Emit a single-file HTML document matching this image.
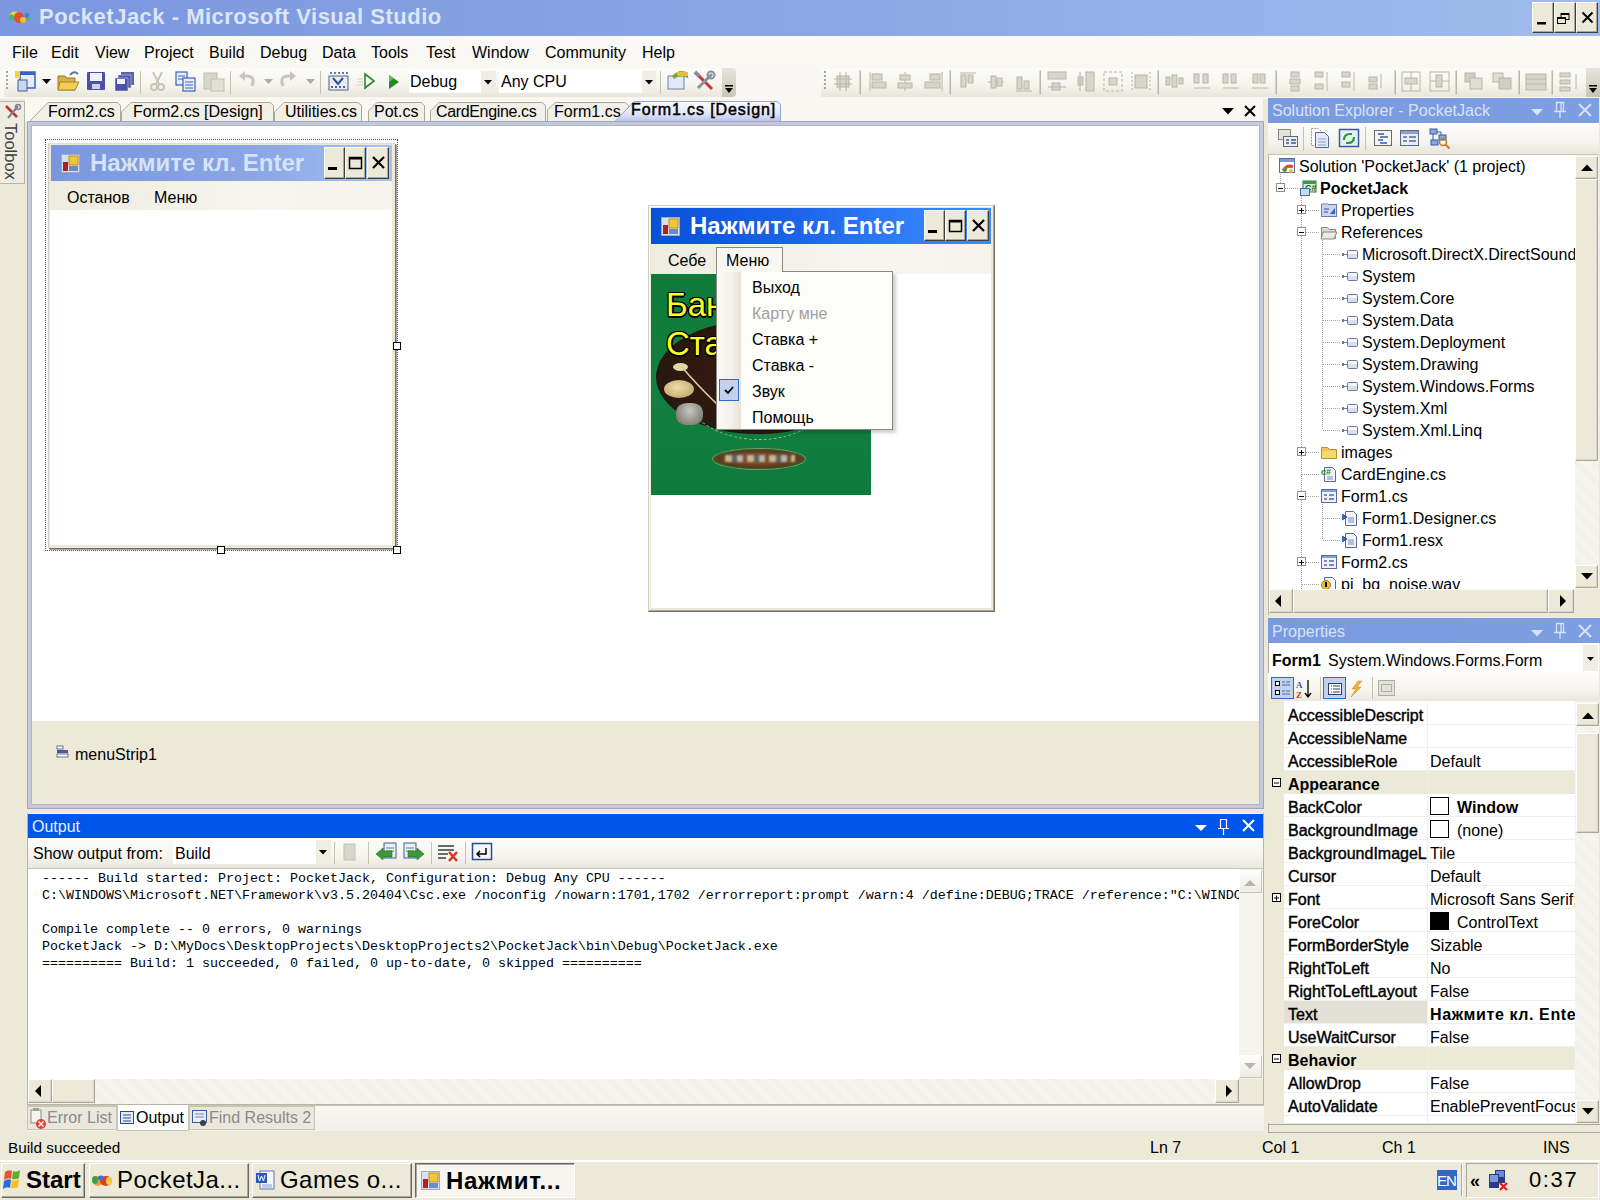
<!DOCTYPE html>
<html><head><meta charset="utf-8">
<style>
*{margin:0;padding:0;box-sizing:border-box}
html,body{width:1600px;height:1200px;overflow:hidden;background:#ECE9D8;font-family:"Liberation Sans",sans-serif;font-size:16px;color:#000;position:relative}
.a{position:absolute}
.t{position:absolute;white-space:nowrap;line-height:1}
svg{position:absolute;overflow:visible}
.mono{font-family:"Liberation Mono",monospace}
.btn3d{position:absolute;background:#ECE9D8;border:1px solid;border-color:#fff #404040 #404040 #fff;box-shadow:inset -1px -1px 0 #ACA899}
.sep{position:absolute;width:1px;background:#C5C2B2;box-shadow:1px 0 0 #fff}
.row{position:absolute;left:0;height:22px}
</style></head><body>

<!-- ============ TITLE BAR ============ -->
<div class="a" style="left:0;top:0;width:1600px;height:36px;background:linear-gradient(90deg,#7A97DF 0%,#86A3E3 40%,#97B4EA 80%,#9FBCEC 100%)"></div>
<svg style="left:0;top:0" width="40" height="36">
 <ellipse cx="15" cy="15" rx="5" ry="3.5" fill="#E0D840"/>
 <ellipse cx="11.5" cy="17.5" rx="2.5" ry="3" fill="#40B880"/>
 <ellipse cx="19" cy="17.5" rx="5" ry="5.5" fill="#E05030"/>
 <ellipse cx="23" cy="20" rx="3" ry="3" fill="#F0C030"/>
 <ellipse cx="27" cy="15.5" rx="2.5" ry="2.5" fill="#4A80C8"/>
 <ellipse cx="28" cy="18.5" rx="2" ry="1.8" fill="#60B040"/>
</svg>
<div class="t" style="left:39px;top:6px;font-size:22px;font-weight:bold;color:#DCE6F8;letter-spacing:0.5px">PocketJack - Microsoft Visual Studio</div>
<div class="btn3d" style="left:1532px;top:2px;width:22px;height:31px"></div>
<div class="btn3d" style="left:1554px;top:2px;width:22px;height:31px"></div>
<div class="btn3d" style="left:1576px;top:2px;width:22px;height:31px"></div>
<svg style="left:0;top:0" width="1600" height="36">
 <rect x="1537" y="22" width="9" height="2.5" fill="#000"/>
 <rect x="1561" y="13.5" width="8" height="6" fill="none" stroke="#000" stroke-width="1"/><rect x="1561" y="13" width="8" height="2" fill="#000"/>
 <rect x="1557.5" y="17.5" width="8" height="6" fill="#ECE9D8" stroke="#000" stroke-width="1"/><rect x="1557" y="17" width="9" height="2" fill="#000"/>
 <path d="M1582.5 12.5 L1592.5 22.5 M1592.5 12.5 L1582.5 22.5" stroke="#000" stroke-width="2"/>
</svg>

<!-- ============ MENU BAR ============ -->
<div class="a" style="left:0;top:36px;width:1600px;height:31px;background:linear-gradient(180deg,#FAF9F5,#F8F7F2)"></div>
<div class="t" style="left:12px;top:45px">File</div>
<div class="t" style="left:51px;top:45px">Edit</div>
<div class="t" style="left:95px;top:45px">View</div>
<div class="t" style="left:144px;top:45px">Project</div>
<div class="t" style="left:209px;top:45px">Build</div>
<div class="t" style="left:260px;top:45px">Debug</div>
<div class="t" style="left:322px;top:45px">Data</div>
<div class="t" style="left:371px;top:45px">Tools</div>
<div class="t" style="left:426px;top:45px">Test</div>
<div class="t" style="left:472px;top:45px">Window</div>
<div class="t" style="left:545px;top:45px">Community</div>
<div class="t" style="left:642px;top:45px">Help</div>

<!-- ============ TOOLBAR ROW ============ -->
<div class="a" style="left:0;top:67px;width:1600px;height:32px;background:#F8F7F3"></div>
<div class="a" style="left:4px;top:68px;width:732px;height:29px;background:linear-gradient(180deg,#FBFBF9 0%,#F6F5F0 55%,#E8E6DA 100%);border-radius:2px 4px 4px 2px"></div>
<div class="a" style="left:722px;top:68px;width:14px;height:29px;background:linear-gradient(180deg,#E6E4DA,#C8C5B5);border-radius:0 4px 4px 0"></div>
<svg style="left:722px;top:68px" width="14" height="29"><rect x="3" y="17" width="8" height="1.5" fill="#000"/><path d="M3 20 L11 20 L7 25 Z" fill="#000"/></svg>

<!-- ============ TOOLBAR ICONS ============ -->
<div class="a" style="left:821px;top:68px;width:779px;height:29px;background:linear-gradient(180deg,#FBFBF9 0%,#F6F5F0 55%,#E8E6DA 100%);border-radius:2px 0 0 2px"></div>
<div class="a" style="left:1586px;top:68px;width:14px;height:29px;background:linear-gradient(180deg,#E6E4DA,#C8C5B5)"></div>
<svg style="left:1586px;top:68px" width="14" height="29"><rect x="3" y="17" width="8" height="1.5" fill="#000"/><path d="M3 20 L11 20 L7 25 Z" fill="#000"/></svg>

<!-- combos -->
<div class="a" style="left:409px;top:71px;width:87px;height:22px;background:#fff"></div>
<div class="a" style="left:481px;top:71px;width:15px;height:22px;background:#EFEDE4"></div>
<div class="t" style="left:410px;top:74px;font-size:16px">Debug</div>
<div class="a" style="left:499px;top:71px;width:157px;height:22px;background:#fff"></div>
<div class="a" style="left:642px;top:71px;width:14px;height:22px;background:#EFEDE4"></div>
<div class="t" style="left:501px;top:74px;font-size:16px">Any CPU</div>

<svg style="left:0;top:0" width="1600" height="100">
 <!-- gripper -->
 <g fill="#A8A69A"><rect x="6" y="71" width="2" height="2"/><rect x="6" y="75" width="2" height="2"/><rect x="6" y="79" width="2" height="2"/><rect x="6" y="83" width="2" height="2"/><rect x="6" y="87" width="2" height="2"/></g>
 <!-- new project -->
 <rect x="20" y="72" width="15" height="16" fill="#E6ECF8" stroke="#3A62B8" stroke-width="1.5"/>
 <rect x="20" y="72" width="15" height="3" fill="#3A62B8"/>
 <rect x="15" y="71" width="5" height="7" fill="#F2D040"/>
 <rect x="18" y="80" width="9" height="11" fill="#C8D8F0" stroke="#3A5A98" stroke-width="1"/>
 <path d="M42 79 L51 79 L46.5 84 Z" fill="#000"/>
 <!-- open -->
 <path d="M58 76 L65 76 L67 78 L75 78 L75 90 L58 90 Z" fill="#D8B048" stroke="#9A7A28" stroke-width="1"/>
 <path d="M60 82 L79 82 L75 90 L58 90 Z" fill="#F4CC58" stroke="#A88428" stroke-width="1"/>
 <path d="M70 75 Q74 70 78 74" fill="none" stroke="#5A78A8" stroke-width="2"/>
 <!-- save -->
 <rect x="87" y="72" width="18" height="18" fill="#4A52A8" rx="1"/>
 <rect x="90" y="73" width="12" height="8" fill="#F0F0F8"/>
 <rect x="92" y="84" width="8" height="5" fill="#D0D4E8"/>
 <!-- save all -->
 <rect x="121" y="72" width="13" height="13" fill="#5A62B0"/>
 <rect x="118" y="75" width="13" height="13" fill="#4E56AA" stroke="#E8E8F0" stroke-width="0.5"/>
 <rect x="115" y="78" width="13" height="13" fill="#4A52A8" stroke="#E8E8F0" stroke-width="0.5"/>
 <rect x="117" y="79" width="8" height="5" fill="#F0F0F8"/>
 <rect x="140" y="71" width="1" height="23" fill="#C5C2B2"/>
 <!-- cut (disabled) -->
 <g stroke="#C8C6BA" stroke-width="2" fill="none"><path d="M153 72 L159 84 M162 72 L156 84"/><circle cx="154" cy="87" r="3"/><circle cx="161" cy="87" r="3"/></g>
 <!-- copy -->
 <rect x="176" y="72" width="11" height="13" fill="#E8EEF8" stroke="#3A62B8" stroke-width="1.2"/>
 <rect x="183" y="78" width="12" height="13" fill="#E8EEF8" stroke="#3A62B8" stroke-width="1.2"/>
 <g stroke="#3A62B8" stroke-width="1"><path d="M178 76h7M178 79h5M185 82h8M185 85h8M185 88h8"/></g>
 <!-- paste disabled -->
 <rect x="204" y="73" width="13" height="16" fill="#D8D6CA" stroke="#C0BEB0" stroke-width="1"/>
 <rect x="211" y="79" width="13" height="12" fill="#E2E0D4" stroke="#C0BEB0" stroke-width="1"/>
 <rect x="230" y="71" width="1" height="23" fill="#C5C2B2"/>
 <!-- undo/redo disabled -->
 <path d="M252 86 Q256 76 246 76 L242 76" fill="none" stroke="#C8C6BA" stroke-width="3"/><path d="M239 76 L245 71 L245 81 Z" fill="#C8C6BA"/>
 <path d="M264 79 L273 79 L268.5 84 Z" fill="#B0AEA2"/>
 <path d="M283 86 Q279 76 289 76 L293 76" fill="none" stroke="#C8C6BA" stroke-width="3"/><path d="M296 76 L290 71 L290 81 Z" fill="#C8C6BA"/>
 <path d="M306 79 L315 79 L310.5 84 Z" fill="#B0AEA2"/>
 <rect x="320" y="71" width="1" height="23" fill="#C5C2B2"/>
 <!-- grid icon -->
 <rect x="329" y="76" width="19" height="14" fill="#E8ECF4" stroke="#506088" stroke-width="1"/>
 <g fill="#6078A8"><rect x="330" y="72" width="2" height="2"/><rect x="334" y="72" width="2" height="2"/><rect x="338" y="72" width="2" height="2"/><rect x="342" y="72" width="2" height="2"/><rect x="346" y="72" width="2" height="2"/></g>
 <path d="M333 78 L338 84 L343 78" fill="none" stroke="#2850A0" stroke-width="2"/>
 <g fill="#506088"><rect x="331" y="86" width="2" height="2"/><rect x="335" y="86" width="2" height="2"/><rect x="339" y="86" width="2" height="2"/><rect x="343" y="86" width="2" height="2"/></g>
 <!-- start without debug outline -->
 <path d="M365 74 L374 81 L365 88 Z" fill="none" stroke="#2A8A2A" stroke-width="1.6"/>
 <g stroke="#E0D0A8" stroke-width="1"><path d="M357 79h6M358 82h6M357 85h6"/></g>
 <!-- green play -->
 <path d="M389 75 L399 82 L389 89 Z" fill="#1E8A1E"/>
 <path d="M389 75 L394 78.5 L389 82 Z" fill="#5CC05C"/>
 <!-- combo arrows -->
 <path d="M484 80 L492 80 L488 84.5 Z" fill="#000"/>
 <path d="M645 80 L653 80 L649 84.5 Z" fill="#000"/>
 <rect x="660" y="71" width="1" height="23" fill="#C5C2B2"/>
 <!-- solution props / tools -->
 <rect x="668" y="76" width="16" height="13" fill="#E0E8F4" stroke="#6A82B0" stroke-width="1"/>
 <path d="M672 76 Q680 68 688 73 L688 78 Q680 74 674 79 Z" fill="#7AA838"/>
 <path d="M676 72 L688 72 L688 76 L678 76 Z" fill="#E8C040"/>
 <path d="M697 74 L712 89" stroke="#D03030" stroke-width="3"/>
 <path d="M712 74 L698 88" stroke="#8A90A0" stroke-width="3"/>
 <circle cx="711" cy="75" r="3.5" fill="none" stroke="#8A90A0" stroke-width="2"/>
 <rect x="694" y="72" width="6" height="4" fill="#8A90A0" transform="rotate(45 697 74)"/>

 <!-- ===== layout toolbar (disabled gray) ===== -->
 <g fill="#A8A69A"><rect x="824" y="71" width="2" height="2"/><rect x="824" y="75" width="2" height="2"/><rect x="824" y="79" width="2" height="2"/><rect x="824" y="83" width="2" height="2"/><rect x="824" y="87" width="2" height="2"/></g>
 <g stroke="#B8B6A8" fill="none" stroke-width="1">
  <!-- grid -->
  <rect x="837" y="76" width="12" height="11" fill="#D8D6C8"/><path d="M834 79h18M834 84h18M840 72v19M846 72v19"/>
  <rect x="860" y="71" width="0.5" height="23" fill="#C5C2B2"/>
  <!-- align lefts -->
  <path d="M870 72v19"/><rect x="872" y="74" width="10" height="6" fill="#D8D6C8"/><rect x="872" y="82" width="14" height="6" fill="#D8D6C8"/>
  <!-- centers -->
  <path d="M905 72v19"/><rect x="900" y="75" width="10" height="5" fill="#D8D6C8"/><rect x="898" y="83" width="14" height="5" fill="#D8D6C8"/>
  <!-- rights -->
  <path d="M942 72v19"/><rect x="930" y="74" width="10" height="6" fill="#D8D6C8"/><rect x="925" y="82" width="15" height="6" fill="#D8D6C8"/>
  <rect x="950" y="71" width="0.5" height="23" fill="#C5C2B2"/>
  <!-- tops -->
  <path d="M960 73h16"/><rect x="961" y="75" width="5" height="12" fill="#D8D6C8"/><rect x="968" y="75" width="5" height="8" fill="#D8D6C8"/>
  <!-- middles -->
  <path d="M988 82h16"/><rect x="991" y="76" width="5" height="12" fill="#D8D6C8"/><rect x="997" y="78" width="5" height="8" fill="#D8D6C8"/>
  <!-- bottoms -->
  <path d="M1016 91h16"/><rect x="1017" y="77" width="5" height="12" fill="#D8D6C8"/><rect x="1024" y="81" width="5" height="8" fill="#D8D6C8"/>
  <rect x="1040" y="71" width="0.5" height="23" fill="#C5C2B2"/>
  <!-- same width -->
  <rect x="1048" y="72" width="18" height="7" fill="#D8D6C8"/><rect x="1052" y="83" width="8" height="7" fill="#D8D6C8"/><path d="M1048 87h18"/>
  <!-- same height -->
  <rect x="1086" y="72" width="8" height="19" fill="#D8D6C8"/><rect x="1078" y="77" width="5" height="8" fill="#D8D6C8"/><path d="M1080 72v19"/>
  <!-- same size -->
  <rect x="1104" y="72" width="18" height="19" stroke-dasharray="3 2"/><rect x="1109" y="78" width="8" height="7" fill="#D8D6C8"/>
  <!-- size to grid -->
  <rect x="1135" y="75" width="12" height="13" fill="#D8D6C8"/><path d="M1132 72v19M1150 72v19" stroke-dasharray="2 2"/>
  <rect x="1158" y="71" width="0.5" height="23" fill="#C5C2B2"/>
  <!-- horizontal spacing group -->
  <rect x="1166" y="77" width="4" height="8" fill="#D8D6C8"/><rect x="1172" y="75" width="5" height="12" fill="#D8D6C8"/><rect x="1179" y="78" width="4" height="6" fill="#D8D6C8"/>
  <rect x="1194" y="74" width="5" height="9" fill="#D8D6C8"/><rect x="1203" y="74" width="5" height="9" fill="#D8D6C8"/><path d="M1194 88h16"/>
  <rect x="1223" y="74" width="5" height="9" fill="#D8D6C8"/><rect x="1231" y="74" width="5" height="9" fill="#D8D6C8"/><path d="M1223 88h16"/>
  <rect x="1253" y="74" width="5" height="9" fill="#D8D6C8"/><rect x="1260" y="74" width="5" height="9" fill="#D8D6C8"/><path d="M1252 88h16"/>
  <rect x="1276" y="71" width="0.5" height="23" fill="#C5C2B2"/>
  <!-- vertical spacing group -->
  <rect x="1291" y="72" width="8" height="5" fill="#D8D6C8"/><rect x="1290" y="79" width="10" height="5" fill="#D8D6C8"/><rect x="1291" y="86" width="8" height="5" fill="#D8D6C8"/>
  <rect x="1315" y="72" width="8" height="5" fill="#D8D6C8"/><rect x="1315" y="84" width="8" height="5" fill="#D8D6C8"/><path d="M1327 72v19"/>
  <rect x="1342" y="72" width="8" height="5" fill="#D8D6C8"/><rect x="1342" y="82" width="8" height="5" fill="#D8D6C8"/><path d="M1354 72v19"/>
  <rect x="1369" y="77" width="8" height="5" fill="#D8D6C8"/><rect x="1369" y="84" width="8" height="5" fill="#D8D6C8"/><path d="M1381 74v14"/>
  <rect x="1395" y="71" width="0.5" height="23" fill="#C5C2B2"/>
  <!-- center horiz/vert -->
  <rect x="1402" y="72" width="18" height="19"/><path d="M1411 72v19"/><rect x="1405" y="78" width="12" height="6" fill="#D8D6C8"/>
  <rect x="1430" y="72" width="19" height="19"/><path d="M1430 81h19"/><rect x="1436" y="75" width="6" height="12" fill="#D8D6C8"/>
  <rect x="1456" y="71" width="0.5" height="23" fill="#C5C2B2"/>
  <!-- bring to front / send back -->
  <rect x="1465" y="73" width="10" height="9" fill="#D0CEC0"/><rect x="1470" y="78" width="12" height="11" fill="#E0DED2"/>
  <rect x="1493" y="73" width="10" height="9" fill="#E0DED2"/><rect x="1499" y="78" width="12" height="11" fill="#D0CEC0"/>
  <rect x="1519" y="71" width="0.5" height="23" fill="#C5C2B2"/>
  <!-- tab order -->
  <rect x="1526" y="74" width="20" height="16" fill="#D8D6C8"/><path d="M1526 79h20M1526 84h20"/>
  <rect x="1552" y="71" width="0.5" height="23" fill="#C5C2B2"/>
  <rect x="1560" y="73" width="10" height="4" fill="#D8D6C8"/><rect x="1560" y="80" width="10" height="4" fill="#D8D6C8"/><rect x="1560" y="87" width="10" height="4" fill="#D8D6C8"/><path d="M1576 74v15"/>
 </g>
</svg>

<!-- ============ TOOLBOX TAB ============ -->
<div class="a" style="left:0;top:101px;width:25px;height:83px;background:#EFEDE3;border:1px solid #B8B5A6;border-left:none"></div>
<svg style="left:0;top:0" width="30" height="190">
 <path d="M6 106 L17 117" stroke="#C03030" stroke-width="2.5"/>
 <path d="M18 106 L8 118" stroke="#7A8090" stroke-width="2"/>
 <circle cx="18" cy="107" r="2.5" fill="none" stroke="#7A8090" stroke-width="1.5"/>
</svg>
<div class="t" style="left:19px;top:123px;font-size:16.5px;color:#404040;transform-origin:0 0;transform:rotate(90deg)">Toolbox</div>

<!-- ============ DOC TABS ============ -->
<div class="a" style="left:25px;top:97px;width:1238px;height:25px;background:#F8F7F2"></div>
<svg style="left:0;top:0" width="1270" height="125">
 <g fill="#F1EFE6" stroke="#ACA899" stroke-width="1">
  <path d="M625.5 121.5 L633.5 110 L641 102.5 L774.5 102.5 L777.5 105 L777.5 121.5" fill="none"/>
  <path d="M547.5 121.5 L547.5 110 L555 102.5 L625 102.5 L628.5 105.5 L628.5 121.5"/>
  <path d="M430.5 121.5 L430.5 111 L439 102.5 L542 102.5 L545.5 105.5 L545.5 121.5"/>
  <path d="M368.5 121.5 L368.5 111 L377 102.5 L421 102.5 L424.5 105.5 L424.5 121.5"/>
  <path d="M274.5 121.5 L274.5 112 L284 102.5 L358 102.5 L361.5 105.5 L361.5 121.5"/>
  <path d="M121.5 121.5 L121.5 112 L131 102.5 L270 102.5 L273.5 105.5 L273.5 121.5"/>
  <path d="M29.5 121.5 L48 102.5 L117 102.5 L120.5 105.5 L120.5 121.5"/>
 </g>
 <defs><linearGradient id="acttab" x1="0" y1="0" x2="0" y2="1"><stop offset="0" stop-color="#FCFCFE"/><stop offset="0.55" stop-color="#E4E8F6"/><stop offset="1" stop-color="#B6C2EA"/></linearGradient></defs>
 
 <!-- tab strip dropdown & close -->
 <path d="M1222 108 L1234 108 L1228 114.5 Z" fill="#000"/>
 <path d="M1245 106 L1255 116 M1255 106 L1245 116" stroke="#000" stroke-width="2"/>
</svg>
<div class="t" style="left:48px;top:104px">Form2.cs</div>
<div class="t" style="left:133px;top:104px">Form2.cs [Design]</div>
<div class="t" style="left:285px;top:104px">Utilities.cs</div>
<div class="t" style="left:374px;top:104px">Pot.cs</div>
<div class="t" style="left:436px;top:104px;letter-spacing:-0.35px">CardEngine.cs</div>
<div class="t" style="left:554px;top:104px">Form1.cs</div>
<svg style="left:0;top:0" width="800" height="125"><path d="M614.5 122 L634 101.5 L777 101.5 L780.5 104.5 L780.5 122 Z" fill="url(#acttab)" stroke="#9AA6C8" stroke-width="1"/></svg>
<div class="t" style="left:631px;top:102px;font-size:16px;letter-spacing:0.9px;-webkit-text-stroke:0.5px #000">Form1.cs [Design]</div>

<!-- ============ DESIGN SURFACE FRAME ============ -->
<div class="a" style="left:27px;top:121px;width:237px;height:688px;width:1237px;background:#C4CADC;border:1px solid #9EA5BC"></div>
<div class="a" style="left:31px;top:125px;width:1229px;height:680px;border:1px solid #AEB4CC;background:#fff"></div>
<div class="a" style="left:32px;top:721px;width:1227px;height:83px;background:#ECE9D8"></div>
<!-- menuStrip1 tray item -->
<svg style="left:56px;top:745px" width="14" height="14">
 <rect x="1" y="1" width="6" height="3" fill="#fff" stroke="#6A7090" stroke-width="1"/>
 <rect x="1" y="5" width="11" height="3" fill="#4858A0"/>
 <rect x="1" y="9" width="11" height="3" fill="#fff" stroke="#6A7090" stroke-width="1"/>
</svg>
<div class="t" style="left:75px;top:747px">menuStrip1</div>

<!-- ============ FORM2 (left window) ============ -->
<div class="a" style="left:45px;top:139px;width:353px;height:412px;border:1px dotted #505050"></div>
<div class="a" style="left:48px;top:143px;width:347px;height:405px;background:#ECE9D8;border-left:1px solid #D0CEC4;border-top:1px solid #E0DED4;box-shadow:1px 1px 0 #716F64, 2px 2px 1px #A8A698"></div>
<div class="a" style="left:51px;top:145px;width:341px;height:36px;background:linear-gradient(90deg,#7A96DF 0%,#8AA6E5 60%,#A6C2F0 100%)"></div>
<div class="a" style="left:50px;top:181px;width:342px;height:29px;background:linear-gradient(90deg,#EEEBDF 0%,#F6F5EF 60%,#F4F3EC 100%)"></div>
<div class="a" style="left:50px;top:210px;width:342px;height:335px;background:#fff"></div>
<svg style="left:61px;top:154px" width="19" height="19">
 <rect x="0.5" y="0.5" width="18" height="18" fill="#D8E0F0" stroke="#9AAAC8"/>
 <rect x="2" y="8" width="5" height="9" fill="#B02020"/>
 <rect x="8" y="2" width="9" height="9" fill="#F0C830" stroke="#C09020"/>
 <rect x="8" y="12" width="9" height="5" fill="#6A8AD0"/>
</svg>
<div class="t" style="left:90px;top:151px;font-size:24px;font-weight:bold;color:#D6E2F8">Нажмите кл. Enter</div>
<div class="btn3d" style="left:324px;top:147px;width:21px;height:32px"></div>
<div class="btn3d" style="left:345px;top:147px;width:21px;height:32px"></div>
<div class="btn3d" style="left:367px;top:147px;width:22px;height:32px"></div>
<svg style="left:0;top:0" width="400" height="200">
 <rect x="328" y="167" width="9" height="3" fill="#000"/>
 <rect x="349.5" y="157.5" width="12" height="11" fill="none" stroke="#000" stroke-width="1.5"/><rect x="349" y="157" width="13" height="2.5" fill="#000"/>
 <path d="M373 157 L384 168 M384 157 L373 168" stroke="#000" stroke-width="2.2"/>
</svg>
<div class="t" style="left:67px;top:190px">Останов</div>
<div class="t" style="left:154px;top:190px">Меню</div>
<!-- handles -->
<div class="a" style="left:393px;top:342px;width:8px;height:8px;background:#fff;border:1px solid #000"></div>
<div class="a" style="left:217px;top:546px;width:8px;height:8px;background:#fff;border:1px solid #000"></div>
<div class="a" style="left:393px;top:546px;width:8px;height:8px;background:#fff;border:1px solid #000"></div>

<!-- ============ FORM1 (center window) ============ -->
<div class="a" style="left:648px;top:205px;width:347px;height:407px;background:#ECE9D8;border:1px solid;border-color:#D0CCC0 #716F64 #716F64 #D0CCC0;box-shadow:inset -1px -1px 0 #ACA899, inset 1px 1px 0 #fff"></div>
<div class="a" style="left:651px;top:208px;width:340px;height:36px;background:linear-gradient(90deg,#0850D8 0%,#1A62E8 40%,#2E7AF6 70%,#3A8CFF 100%)"></div>
<div class="a" style="left:651px;top:244px;width:340px;height:30px;background:linear-gradient(90deg,#EEEBDF 0%,#F6F5EF 60%,#F5F4EE 100%)"></div>
<div class="a" style="left:651px;top:274px;width:340px;height:334px;background:#fff"></div>
<svg style="left:661px;top:217px" width="19" height="19">
 <rect x="0.5" y="0.5" width="18" height="18" fill="#D8E0F0" stroke="#9AAAC8"/>
 <rect x="2" y="8" width="5" height="9" fill="#B02020"/>
 <rect x="8" y="2" width="9" height="9" fill="#F0C830" stroke="#C09020"/>
 <rect x="8" y="12" width="9" height="5" fill="#6A8AD0"/>
</svg>
<div class="t" style="left:690px;top:214px;font-size:24px;font-weight:bold;color:#fff">Нажмите кл. Enter</div>
<div class="btn3d" style="left:924px;top:210px;width:21px;height:31px"></div>
<div class="btn3d" style="left:945px;top:210px;width:21px;height:31px"></div>
<div class="btn3d" style="left:967px;top:210px;width:22px;height:31px"></div>
<svg style="left:0;top:0" width="1000" height="260">
 <rect x="928" y="230" width="9" height="3" fill="#000"/>
 <rect x="949.5" y="220.5" width="12" height="11" fill="none" stroke="#000" stroke-width="1.5"/><rect x="949" y="220" width="13" height="2.5" fill="#000"/>
 <path d="M973 220 L984 231 M984 220 L973 231" stroke="#000" stroke-width="2.2"/>
</svg>
<div class="t" style="left:668px;top:253px">Себе</div>
<div class="a" style="left:716px;top:247px;width:67px;height:27px;background:#F8F7F2;border:1px solid #8A8880;border-bottom:none"></div>
<div class="t" style="left:726px;top:253px">Меню</div>

<!-- green image -->
<div class="a" style="left:651px;top:274px;width:220px;height:221px;background:linear-gradient(180deg,#0F7A3A 0%,#128040 50%,#0F7A3C 100%);overflow:hidden">
 <div class="a" style="left:5px;top:46px;width:204px;height:114px;border-radius:50%;background:radial-gradient(ellipse at 50% 50%,#3A1A12 0%,#2E1810 55%,#221A10 80%,rgba(18,128,64,0) 100%)"></div>
 <div class="a" style="left:28px;top:50px;width:160px;height:116px;border-radius:50%;border:1px dashed #90E090;border-top-color:transparent;border-left-color:transparent;border-right-color:transparent;opacity:0.8"></div>
 <div class="a" style="left:13px;top:106px;width:30px;height:18px;border-radius:50%;background:radial-gradient(ellipse at 45% 40%,#F0DCA8,#B89A60)"></div>
 <div class="a" style="left:25px;top:129px;width:27px;height:22px;border-radius:40%;background:radial-gradient(ellipse at 50% 35%,#C8C8C0,#6A6A60)"></div>
 <div class="a" style="left:22px;top:89px;width:15px;height:8px;border-radius:50%;background:#E8D8A0"></div>
 <svg style="left:0;top:0" width="220" height="221"><path d="M30 92 Q45 110 68 132" stroke="#D8D0A0" stroke-width="1.5" fill="none"/></svg>
 <div class="a" style="left:62px;top:175px;width:92px;height:20px;border-radius:50%;background:radial-gradient(ellipse,#7A4A28 30%,#5A3A20 60%,#3A7A38 85%,#128040 100%);box-shadow:0 0 0 1px #6AA060"></div>
 <div class="a" style="left:74px;top:181px;width:70px;height:7px;background:repeating-linear-gradient(90deg,#C8B890 0 7px,#606058 7px 12px,#B8B8B0 12px 18px,#7A4A28 18px 22px);filter:blur(0.8px)"></div>
 <div class="t" style="left:15px;top:14px;font-size:33px;color:#FFFF20;text-shadow:-1px -1px 0 #000,1px -1px 0 #000,-1px 1px 0 #000,1px 1px 0 #000,0 2px 0 #000,2px 0 0 #000">Бан</div>
 <div class="t" style="left:15px;top:53px;font-size:33px;color:#FFFF20;text-shadow:-1px -1px 0 #000,1px -1px 0 #000,-1px 1px 0 #000,1px 1px 0 #000,0 2px 0 #000,2px 0 0 #000">Ста</div>
</div>

<!-- dropdown menu -->
<div class="a" style="left:719px;top:274px;width:177px;height:159px;background:rgba(0,0,0,0.18);filter:blur(1.5px)"></div>
<div class="a" style="left:716px;top:271px;width:177px;height:159px;background:#FCFCF9;border:1px solid #8A8880"></div>
<div class="a" style="left:717px;top:272px;width:24px;height:157px;background:linear-gradient(90deg,#FBFAF6 0%,#F2F0E8 60%,#E6E3D6 100%)"></div>
<div class="a" style="left:717px;top:271px;width:65px;height:1px;background:#F8F7F2"></div>
<div class="a" style="left:719px;top:379px;width:20px;height:22px;background:#C1D2EE;border:1px solid #316AC5"></div>
<svg style="left:719px;top:379px" width="20" height="22"><path d="M6 11 L9 14 L14 8" fill="none" stroke="#000" stroke-width="1.8"/></svg>
<div class="t" style="left:752px;top:280px">Выход</div>
<div class="t" style="left:752px;top:306px;color:#A0A0A0">Карту мне</div>
<div class="t" style="left:752px;top:332px">Ставка +</div>
<div class="t" style="left:752px;top:358px">Ставка -</div>
<div class="t" style="left:752px;top:384px">Звук</div>
<div class="t" style="left:752px;top:410px">Помощь</div>

<!-- ============ OUTPUT WINDOW ============ -->
<div class="a" style="left:27px;top:813px;width:1237px;height:292px;background:#F4F3EE;border:1px solid #B8B5A6;border-top:none"></div>
<div class="a" style="left:28px;top:814px;width:1235px;height:24px;background:#0056EC"></div>
<div class="t" style="left:32px;top:819px;color:#E8EEFF">Output</div>
<svg style="left:0;top:0" width="1270" height="1110">
 <path d="M1195 825 L1207 825 L1201 831 Z" fill="#fff"/>
 <g stroke="#fff" fill="none" stroke-width="1.2"><path d="M1220.5 819.5 h6 v9 h-6 z M1218 828.5 h11 M1223.5 829 v6"/></g>
 <path d="M1243 820 L1254 831 M1254 820 L1243 831" stroke="#fff" stroke-width="2"/>
</svg>
<div class="a" style="left:28px;top:838px;width:1235px;height:31px;background:linear-gradient(180deg,#FCFCFA 0%,#F5F4EE 60%,#EAE8DD 100%);border-bottom:1px solid #C8C5B8"></div>
<div class="t" style="left:33px;top:846px">Show output from:</div>
<div class="a" style="left:173px;top:840px;width:158px;height:24px;background:#fff"></div>
<div class="a" style="left:316px;top:840px;width:15px;height:24px;background:#EFEDE4"></div>
<div class="t" style="left:175px;top:846px">Build</div>
<svg style="left:0;top:0" width="500" height="870">
 <path d="M319 850 L327 850 L323 854.5 Z" fill="#000"/>
 <rect x="334" y="842" width="1" height="22" fill="#C5C2B2"/>
 <rect x="344" y="844" width="11" height="16" fill="#D8D6CA" stroke="#C4C2B4"/>
 <rect x="368" y="842" width="1" height="22" fill="#C5C2B2"/>
 <rect x="384" y="843" width="12" height="15" fill="#E8EEF8" stroke="#3A5A98"/><path d="M386 848h8M386 851h8" stroke="#40A040"/>
 <path d="M376 854 L383 848 L383 851 L392 851 L392 857 L383 857 L383 860 Z" fill="#3A9A3A" stroke="#2A6A2A" stroke-width="0.6"/>
 <rect x="404" y="843" width="12" height="15" fill="#E8EEF8" stroke="#3A5A98"/><path d="M406 848h8M406 851h8" stroke="#40A040"/>
 <path d="M424 854 L417 848 L417 851 L408 851 L408 857 L417 857 L417 860 Z" fill="#3A9A3A" stroke="#2A6A2A" stroke-width="0.6"/>
 <rect x="431" y="842" width="1" height="22" fill="#C5C2B2"/>
 <g stroke="#6A6A6A" stroke-width="2"><path d="M438 846h16M438 850h16M438 854h10M438 858h8"/></g>
 <path d="M449 852 L457 861 M457 852 L449 861" stroke="#E03020" stroke-width="2.5"/>
 <rect x="465" y="842" width="1" height="22" fill="#C5C2B2"/>
 <rect x="472.5" y="843.5" width="19" height="16" fill="#F4F6FC" stroke="#2A4A98" stroke-width="1.5"/>
 <path d="M486 848 v6 h-9 M480 851 L477 854 L480 857" fill="none" stroke="#000" stroke-width="1.5"/>
</svg>

<!-- text area -->
<div class="a" style="left:28px;top:869px;width:1211px;height:210px;background:#fff"></div>
<div class="mono t" style="left:42px;top:870px;font-size:13.33px;line-height:17px">------ Build started: Project: PocketJack, Configuration: Debug Any CPU ------</div>
<div class="mono t" style="left:42px;top:887px;font-size:13.33px;line-height:17px;width:1197px;overflow:hidden">C:\WINDOWS\Microsoft.NET\Framework\v3.5.20404\Csc.exe /noconfig /nowarn:1701,1702 /errorreport:prompt /warn:4 /define:DEBUG;TRACE /reference:"C:\WINDOWS\Microsoft</div>
<div class="mono t" style="left:42px;top:921px;font-size:13.33px;line-height:17px">Compile complete -- 0 errors, 0 warnings</div>
<div class="mono t" style="left:42px;top:938px;font-size:13.33px;line-height:17px">PocketJack -&gt; D:\MyDocs\DesktopProjects\DesktopProjects2\PocketJack\bin\Debug\PocketJack.exe</div>
<div class="mono t" style="left:42px;top:955px;font-size:13.33px;line-height:17px">========== Build: 1 succeeded, 0 failed, 0 up-to-date, 0 skipped ==========</div>

<!-- vertical scrollbar -->
<div class="a" style="left:1239px;top:869px;width:24px;height:210px;background:#F4F3EE"></div>
<div class="a" style="left:1239px;top:870px;width:23px;height:23px;background:linear-gradient(180deg,#FDFDFB,#EDEBE2);border:1px solid;border-color:#fff #C9C6B8 #C9C6B8 #fff"></div>
<div class="a" style="left:1239px;top:1055px;width:23px;height:23px;background:linear-gradient(180deg,#FDFDFB,#EDEBE2);border:1px solid;border-color:#fff #C9C6B8 #C9C6B8 #fff"></div>
<svg style="left:0;top:0" width="1270" height="1110">
 <path d="M1244 886 L1256 886 L1250 880 Z" fill="#B8B6AA"/>
 <path d="M1244 1063 L1256 1063 L1250 1069 Z" fill="#B8B6AA"/>
</svg>
<!-- horizontal scrollbar -->
<div class="a" style="left:28px;top:1079px;width:1235px;height:25px;background:#F4F3EE;background-image:repeating-linear-gradient(45deg,#F8F7F3 0 1px,#EFEEE7 1px 2px)"></div>
<div class="a" style="left:28px;top:1079px;width:24px;height:24px;background:#ECE9D8;border:1px solid;border-color:#fff #ACA899 #ACA899 #fff;box-shadow:inset -1px -1px 0 #D8D5C8"></div>
<div class="a" style="left:52px;top:1079px;width:43px;height:24px;background:#ECE9D8;border:1px solid;border-color:#fff #ACA899 #ACA899 #fff;box-shadow:inset -1px -1px 0 #D8D5C8"></div>
<div class="a" style="left:1215px;top:1079px;width:24px;height:24px;background:#ECE9D8;border:1px solid;border-color:#fff #ACA899 #ACA899 #fff;box-shadow:inset -1px -1px 0 #D8D5C8"></div>
<div class="a" style="left:1239px;top:1079px;width:24px;height:25px;background:#ECE9D8"></div>
<svg style="left:0;top:0" width="1270" height="1110">
 <path d="M35 1091 L41 1085 L41 1097 Z" fill="#000"/>
 <path d="M1232 1091 L1226 1085 L1226 1097 Z" fill="#000"/>
</svg>

<!-- bottom tabs -->
<div class="a" style="left:27px;top:1105px;width:1237px;height:26px;background:linear-gradient(180deg,#F8F7F3,#F2F0E8);border-top:1px solid #C8C5B5"></div>
<div class="a" style="left:27px;top:1104px;width:1237px;height:1px;background:#B8B5A6"></div>
<div class="a" style="left:27px;top:1106px;width:90px;height:24px;background:#EAE7DC;border:1px solid #C8C5B5"></div>
<div class="a" style="left:117px;top:1105px;width:72px;height:26px;background:#fff;border:1px solid #C8C5B5;border-top:none"></div>
<div class="a" style="left:189px;top:1106px;width:126px;height:24px;background:#EAE7DC;border:1px solid #C8C5B5"></div>
<svg style="left:0;top:0" width="330" height="1135">
 <rect x="31" y="1110" width="10" height="13" fill="#F4F4F0" stroke="#8A8A8A"/>
 <rect x="33" y="1108" width="6" height="3" fill="#A0A090"/>
 <circle cx="41" cy="1124" r="5" fill="#E04030"/><path d="M38.5 1121.5 L43.5 1126.5 M43.5 1121.5 L38.5 1126.5" stroke="#fff" stroke-width="1.3"/>
 <rect x="120.5" y="1111.5" width="13" height="12" fill="#E8EEF8" stroke="#2A4A98"/><path d="M123 1115h8M123 1118h8M123 1121h8" stroke="#2A4A98"/>
 <rect x="192.5" y="1110.5" width="14" height="12" fill="#E8EEF8" stroke="#3A5A98"/><path d="M195 1114h9M195 1117h9" stroke="#6A8AC8"/>
 <circle cx="203" cy="1123" r="3" fill="#404040"/>
</svg>
<div class="t" style="left:47px;top:1110px;color:#8A8A8A">Error List</div>
<div class="t" style="left:136px;top:1110px;color:#000">Output</div>
<div class="t" style="left:209px;top:1110px;color:#8A8A8A">Find Results 2</div>

<!-- ============ SOLUTION EXPLORER ============ -->
<div class="a" style="left:1268px;top:98px;width:332px;height:517px;background:#ECE9D8;border-left:1px solid #ACA899"></div>
<div class="a" style="left:1268px;top:98px;width:331px;height:25px;background:linear-gradient(90deg,#7A9AE0,#7E9EE2)"></div>
<div class="t" style="left:1272px;top:103px;color:#D8E2F8">Solution Explorer - PocketJack</div>
<div class="a" style="left:1268px;top:123px;width:331px;height:32px;background:linear-gradient(180deg,#FCFCFA 0%,#F5F4EE 60%,#E8E6DA 100%);border-bottom:1px solid #C8C5B8"></div>
<div class="a" style="left:1268px;top:155px;width:331px;height:459px;background:#fff;border:1px solid #B8B5A6;border-top:none"></div>

<svg style="left:0;top:0" width="1600" height="160">
<path d="M1531 109 L1543 109 L1537 115.5 Z" fill="#D8E2F8"/>
<g stroke="#D8E2F8" fill="none" stroke-width="1.3"><path d="M1556.5 102.5 h7 v9 h-7 z M1554 111.5 h12 M1560 112 v6 M1561 103 v8"/></g>
<path d="M1579 104 L1591 116 M1591 104 L1579 116" stroke="#D8E2F8" stroke-width="2"/>

 <rect x="1278.5" y="129.5" width="12" height="10" fill="#E4E2D8" stroke="#8A8A80"/><rect x="1283.5" y="136.5" width="14" height="10" fill="#E8ECF4" stroke="#5A6A88"/><path d="M1286 140h3M1291 140h5M1286 143h3M1291 143h5" stroke="#4A5A78" stroke-width="1.4"/>
 <rect x="1303" y="127" width="1" height="24" fill="#C5C2B2"/>
 <path d="M1311.5 128.5 h7 l3 3 v14 h-10 z" fill="#fff" stroke="#9A9A9A" stroke-dasharray="2 1"/><path d="M1315.5 132.5 h9 l4 4 v11 h-13 z" fill="#E4EAF6" stroke="#5A6A98"/><path d="M1318 139h8M1318 142h8M1318 145h8" stroke="#8AA0D0"/>
 <rect x="1339.5" y="129.5" width="19" height="17" fill="#E8F0F8" stroke="#3A5AA8" stroke-width="1.5"/><path d="M1344 140 q0 -6 6 -6 l2 0" stroke="#2A9A2A" stroke-width="2.2" fill="none"/><path d="M1354 137 q0 6 -6 6 l-2 0" stroke="#2A9A2A" stroke-width="2.2" fill="none"/>
 <rect x="1365" y="127" width="1" height="24" fill="#C5C2B2"/>
 <rect x="1374.5" y="130.5" width="17" height="15" fill="#F4F4F0" stroke="#6A6A60"/><path d="M1378 134h6M1380 137h8M1378 140h5M1380 143h7" stroke="#3A5AB8" stroke-width="1.3"/>
 <rect x="1400.5" y="130.5" width="18" height="15" fill="#E8ECF4" stroke="#5A6A88"/><rect x="1401" y="131" width="17" height="3" fill="#8AA0D0"/><path d="M1403 137h4M1409 137h7M1403 141h4M1409 141h7" stroke="#5A6A88" stroke-width="1.5"/>
 <rect x="1430" y="129" width="7" height="5" fill="#8AA8E0" stroke="#3A5AA8"/><rect x="1439" y="135" width="7" height="5" fill="#8AA8E0" stroke="#3A5AA8"/><rect x="1431" y="140" width="7" height="5" fill="#8AA8E0" stroke="#3A5AA8"/><path d="M1433 134 v6 M1437 132 h4 v3" stroke="#3A5AA8" fill="none"/><circle cx="1443" cy="142" r="3.5" fill="none" stroke="#C08020" stroke-width="1.5"/><path d="M1445.5 144.5 l4 4" stroke="#C08020" stroke-width="2"/>

</svg>
<div class="a" style="left:1269px;top:155px;width:306px;height:434px;overflow:hidden">
<svg style="left:-1269px;top:-155px" width="1600" height="620">
<path d="M1280.5 174 V188" stroke="#A0A0A0" stroke-width="1" stroke-dasharray="1 1"/>
<path d="M1301.5 196 V590" stroke="#A0A0A0" stroke-width="1" stroke-dasharray="1 1"/>
<path d="M1322.5 240 V430" stroke="#A0A0A0" stroke-width="1" stroke-dasharray="1 1"/>
<path d="M1322.5 504 V540" stroke="#A0A0A0" stroke-width="1" stroke-dasharray="1 1"/>
<rect x="1279.5" y="158.5" width="15" height="14" fill="#fff" stroke="#5A6A98"/><rect x="1280" y="159" width="14" height="3" fill="#7A9AD8"/><path d="M1283 171 Q1287 164 1293 167" stroke="#E05020" stroke-width="3" fill="none"/><circle cx="1285" cy="170" r="2" fill="#40A040"/><circle cx="1291" cy="171" r="2" fill="#F0C030"/>
<path d="M1281 188.5 H1299" stroke="#A0A0A0" stroke-width="1" stroke-dasharray="1 1"/>
<rect x="1276.5" y="183.5" width="8" height="8" fill="#fff" stroke="#919191"/>
<path d="M1278 188.5 h5" stroke="#000"/>
<rect x="1303" y="181" width="13" height="11" fill="#D8ECD8" stroke="#2A7A3A"/><rect x="1303" y="181" width="13" height="3" fill="#3A9A4A"/><text x="1305" y="191" font-size="9" font-weight="bold" fill="#1A6A2A" font-family="Liberation Sans">C#</text><rect x="1300.5" y="188.5" width="9" height="7" fill="#C8D8F0" stroke="#4A6AA8"/>
<path d="M1302 210.5 H1320" stroke="#A0A0A0" stroke-width="1" stroke-dasharray="1 1"/>
<rect x="1297.5" y="205.5" width="8" height="8" fill="#fff" stroke="#919191"/>
<path d="M1299 210.5 h5" stroke="#000"/>
<path d="M1301.5 208 v5" stroke="#000"/>
<rect x="1321.5" y="204.5" width="15" height="12" fill="#C8D4F0" stroke="#6A7AA8"/><rect x="1322" y="203" width="6" height="2" fill="#B0B8D0"/><path d="M1324 209h5M1324 212h4" stroke="#3A4A98"/><path d="M1330 214 L1335 208 L1335 214 Z" fill="#3A5AB8"/>
<path d="M1302 232.5 H1320" stroke="#A0A0A0" stroke-width="1" stroke-dasharray="1 1"/>
<rect x="1297.5" y="227.5" width="8" height="8" fill="#fff" stroke="#919191"/>
<path d="M1299 232.5 h5" stroke="#000"/>
<path d="M1321.5 227.5 h6 l2 2 h6 v9 h-14 z" fill="#D8D8D0" stroke="#8A8A80"/><path d="M1323 232 h14 l-3 7 h-13 z" fill="#EAEAE2" stroke="#8A8A80"/>
<path d="M1323 254.5 H1341" stroke="#A0A0A0" stroke-width="1" stroke-dasharray="1 1"/>
<rect x="1347.5" y="250.5" width="10" height="8" rx="1" fill="#D8E0F0" stroke="#6A7A98"/><rect x="1348" y="251" width="9" height="3" fill="#F4F6FC"/><path d="M1342 254.5 h5" stroke="#6A7A98"/><rect x="1342" y="253" width="2" height="3" fill="#6A7A98"/>
<path d="M1323 276.5 H1341" stroke="#A0A0A0" stroke-width="1" stroke-dasharray="1 1"/>
<rect x="1347.5" y="272.5" width="10" height="8" rx="1" fill="#D8E0F0" stroke="#6A7A98"/><rect x="1348" y="273" width="9" height="3" fill="#F4F6FC"/><path d="M1342 276.5 h5" stroke="#6A7A98"/><rect x="1342" y="275" width="2" height="3" fill="#6A7A98"/>
<path d="M1323 298.5 H1341" stroke="#A0A0A0" stroke-width="1" stroke-dasharray="1 1"/>
<rect x="1347.5" y="294.5" width="10" height="8" rx="1" fill="#D8E0F0" stroke="#6A7A98"/><rect x="1348" y="295" width="9" height="3" fill="#F4F6FC"/><path d="M1342 298.5 h5" stroke="#6A7A98"/><rect x="1342" y="297" width="2" height="3" fill="#6A7A98"/>
<path d="M1323 320.5 H1341" stroke="#A0A0A0" stroke-width="1" stroke-dasharray="1 1"/>
<rect x="1347.5" y="316.5" width="10" height="8" rx="1" fill="#D8E0F0" stroke="#6A7A98"/><rect x="1348" y="317" width="9" height="3" fill="#F4F6FC"/><path d="M1342 320.5 h5" stroke="#6A7A98"/><rect x="1342" y="319" width="2" height="3" fill="#6A7A98"/>
<path d="M1323 342.5 H1341" stroke="#A0A0A0" stroke-width="1" stroke-dasharray="1 1"/>
<rect x="1347.5" y="338.5" width="10" height="8" rx="1" fill="#D8E0F0" stroke="#6A7A98"/><rect x="1348" y="339" width="9" height="3" fill="#F4F6FC"/><path d="M1342 342.5 h5" stroke="#6A7A98"/><rect x="1342" y="341" width="2" height="3" fill="#6A7A98"/>
<path d="M1323 364.5 H1341" stroke="#A0A0A0" stroke-width="1" stroke-dasharray="1 1"/>
<rect x="1347.5" y="360.5" width="10" height="8" rx="1" fill="#D8E0F0" stroke="#6A7A98"/><rect x="1348" y="361" width="9" height="3" fill="#F4F6FC"/><path d="M1342 364.5 h5" stroke="#6A7A98"/><rect x="1342" y="363" width="2" height="3" fill="#6A7A98"/>
<path d="M1323 386.5 H1341" stroke="#A0A0A0" stroke-width="1" stroke-dasharray="1 1"/>
<rect x="1347.5" y="382.5" width="10" height="8" rx="1" fill="#D8E0F0" stroke="#6A7A98"/><rect x="1348" y="383" width="9" height="3" fill="#F4F6FC"/><path d="M1342 386.5 h5" stroke="#6A7A98"/><rect x="1342" y="385" width="2" height="3" fill="#6A7A98"/>
<path d="M1323 408.5 H1341" stroke="#A0A0A0" stroke-width="1" stroke-dasharray="1 1"/>
<rect x="1347.5" y="404.5" width="10" height="8" rx="1" fill="#D8E0F0" stroke="#6A7A98"/><rect x="1348" y="405" width="9" height="3" fill="#F4F6FC"/><path d="M1342 408.5 h5" stroke="#6A7A98"/><rect x="1342" y="407" width="2" height="3" fill="#6A7A98"/>
<path d="M1323 430.5 H1341" stroke="#A0A0A0" stroke-width="1" stroke-dasharray="1 1"/>
<rect x="1347.5" y="426.5" width="10" height="8" rx="1" fill="#D8E0F0" stroke="#6A7A98"/><rect x="1348" y="427" width="9" height="3" fill="#F4F6FC"/><path d="M1342 430.5 h5" stroke="#6A7A98"/><rect x="1342" y="429" width="2" height="3" fill="#6A7A98"/>
<path d="M1302 452.5 H1320" stroke="#A0A0A0" stroke-width="1" stroke-dasharray="1 1"/>
<rect x="1297.5" y="447.5" width="8" height="8" fill="#fff" stroke="#919191"/>
<path d="M1299 452.5 h5" stroke="#000"/>
<path d="M1301.5 450 v5" stroke="#000"/>
<path d="M1321.5 447.5 h6 l2 2 h7 v9 h-15 z" fill="#F4C850" stroke="#B8902A"/><rect x="1322" y="451" width="14" height="7" fill="#F8D870"/>
<path d="M1302 474.5 H1320" stroke="#A0A0A0" stroke-width="1" stroke-dasharray="1 1"/>
<path d="M1324.5 467.5 h8 l3 3 v11 h-11 z" fill="#F4F6FC" stroke="#5A6A98"/><text x="1321" y="475" font-size="9" font-weight="bold" fill="#1A8A2A" font-family="Liberation Sans">c#</text><path d="M1327 477h6M1327 479h6" stroke="#6A8AC8"/>
<path d="M1302 496.5 H1320" stroke="#A0A0A0" stroke-width="1" stroke-dasharray="1 1"/>
<rect x="1297.5" y="491.5" width="8" height="8" fill="#fff" stroke="#919191"/>
<path d="M1299 496.5 h5" stroke="#000"/>
<rect x="1321.5" y="489.5" width="15" height="13" fill="#EEF2FA" stroke="#5A6A98"/><rect x="1322" y="490" width="14" height="2" fill="#8AA0D0"/><path d="M1324 495h3M1329 495h5M1324 499h3M1329 499h5" stroke="#5A6A98" stroke-width="1.5"/>
<path d="M1323 518.5 H1341" stroke="#A0A0A0" stroke-width="1" stroke-dasharray="1 1"/>
<path d="M1345.5 511.5 h8 l3 3 v11 h-11 z" fill="#F4F6FC" stroke="#5A6A98"/><path d="M1348 518h6M1348 520h6M1348 522h6" stroke="#6A8AC8"/><path d="M1342 514 l5 3 l-5 3" fill="#3A6AC8" stroke="#2A4A98"/>
<path d="M1323 540.5 H1341" stroke="#A0A0A0" stroke-width="1" stroke-dasharray="1 1"/>
<path d="M1345.5 533.5 h8 l3 3 v11 h-11 z" fill="#F4F6FC" stroke="#5A6A98"/><path d="M1348 540h6M1348 542h6M1348 544h6" stroke="#6A8AC8"/><path d="M1342 536 l5 3 l-5 3" fill="#3A6AC8" stroke="#2A4A98"/>
<path d="M1302 562.5 H1320" stroke="#A0A0A0" stroke-width="1" stroke-dasharray="1 1"/>
<rect x="1297.5" y="557.5" width="8" height="8" fill="#fff" stroke="#919191"/>
<path d="M1299 562.5 h5" stroke="#000"/>
<path d="M1301.5 560 v5" stroke="#000"/>
<rect x="1321.5" y="555.5" width="15" height="13" fill="#EEF2FA" stroke="#5A6A98"/><rect x="1322" y="556" width="14" height="2" fill="#8AA0D0"/><path d="M1324 561h3M1329 561h5M1324 565h3M1329 565h5" stroke="#5A6A98" stroke-width="1.5"/>
<path d="M1302 584.5 H1320" stroke="#A0A0A0" stroke-width="1" stroke-dasharray="1 1"/>
<path d="M1324.5 577.5 h8 l3 3 v11 h-11 z" fill="#F4F6FC" stroke="#5A6A98"/><circle cx="1326" cy="585" r="4.5" fill="#F0C030" stroke="#A07810"/><rect x="1325" y="582" width="2" height="5" fill="#000"/>
</svg>
<div class="t" style="left:30px;top:4px;">Solution 'PocketJack' (1 project)</div>
<div class="t" style="left:51px;top:26px;font-weight:bold;">PocketJack</div>
<div class="t" style="left:72px;top:48px;">Properties</div>
<div class="t" style="left:72px;top:70px;">References</div>
<div class="t" style="left:93px;top:92px;">Microsoft.DirectX.DirectSound</div>
<div class="t" style="left:93px;top:114px;">System</div>
<div class="t" style="left:93px;top:136px;">System.Core</div>
<div class="t" style="left:93px;top:158px;">System.Data</div>
<div class="t" style="left:93px;top:180px;">System.Deployment</div>
<div class="t" style="left:93px;top:202px;">System.Drawing</div>
<div class="t" style="left:93px;top:224px;">System.Windows.Forms</div>
<div class="t" style="left:93px;top:246px;">System.Xml</div>
<div class="t" style="left:93px;top:268px;">System.Xml.Linq</div>
<div class="t" style="left:72px;top:290px;">images</div>
<div class="t" style="left:72px;top:312px;">CardEngine.cs</div>
<div class="t" style="left:72px;top:334px;">Form1.cs</div>
<div class="t" style="left:93px;top:356px;">Form1.Designer.cs</div>
<div class="t" style="left:93px;top:378px;">Form1.resx</div>
<div class="t" style="left:72px;top:400px;">Form2.cs</div>
<div class="t" style="left:72px;top:422px;">pj_bg_noise.wav</div>
</div>

<div class="a" style="left:1575px;top:155px;width:24px;height:434px;background:#F4F3EE;background-image:repeating-linear-gradient(45deg,#F8F7F3 0 1px,#EFEEE7 1px 2px)"></div>
<div class="a" style="left:1575px;top:156px;width:23px;height:23px;background:#ECE9D8;border:1px solid;border-color:#fff #ACA899 #ACA899 #fff;box-shadow:inset -1px -1px 0 #D8D5C8"></div>
<div class="a" style="left:1575px;top:179px;width:23px;height:282px;background:#ECE9D8;border:1px solid;border-color:#fff #ACA899 #ACA899 #fff;box-shadow:inset -1px -1px 0 #D8D5C8"></div>
<div class="a" style="left:1575px;top:565px;width:23px;height:23px;background:#ECE9D8;border:1px solid;border-color:#fff #ACA899 #ACA899 #fff;box-shadow:inset -1px -1px 0 #D8D5C8"></div>
<div class="a" style="left:1269px;top:589px;width:330px;height:25px;background:#ECE9D8"></div>
<div class="a" style="left:1269px;top:589px;width:24px;height:24px;background:#ECE9D8;border:1px solid;border-color:#fff #ACA899 #ACA899 #fff;box-shadow:inset -1px -1px 0 #D8D5C8"></div>
<div class="a" style="left:1293px;top:589px;width:255px;height:24px;background:#ECE9D8;border:1px solid;border-color:#fff #ACA899 #ACA899 #fff;box-shadow:inset -1px -1px 0 #D8D5C8"></div>
<div class="a" style="left:1548px;top:589px;width:26px;height:24px;background:#ECE9D8;border:1px solid;border-color:#fff #ACA899 #ACA899 #fff;box-shadow:inset -1px -1px 0 #D8D5C8"></div>
<svg style="left:0;top:0" width="1600" height="620">
 <path d="M1581 171 L1593 171 L1587 164.5 Z" fill="#000"/>
 <path d="M1581 573 L1593 573 L1587 579.5 Z" fill="#000"/>
 <path d="M1275 601 L1281 595 L1281 607 Z" fill="#000"/>
 <path d="M1566 601 L1560 595 L1560 607 Z" fill="#000"/>
</svg>

<!-- ============ PROPERTIES ============ -->
<div class="a" style="left:1268px;top:618px;width:332px;height:515px;background:#ECE9D8;border-left:1px solid #ACA899"></div>
<div class="a" style="left:1268px;top:618px;width:332px;height:25px;background:linear-gradient(90deg,#7A9AE0,#7E9EE2)"></div>
<div class="t" style="left:1272px;top:624px;color:#D8E2F8">Properties</div>
<svg style="left:0;top:0" width="1600" height="710">
 <path d="M1531 630 L1543 630 L1537 636.5 Z" fill="#D8E2F8"/>
 <g stroke="#D8E2F8" fill="none" stroke-width="1.3"><path d="M1556.5 623.5 h7 v9 h-7 z M1554 632.5 h12 M1560 633 v6 M1561 624 v8"/></g>
 <path d="M1579 625 L1591 637 M1591 625 L1579 637" stroke="#D8E2F8" stroke-width="2"/>
</svg>
<div class="a" style="left:1269px;top:643px;width:330px;height:30px;background:#fff"></div>
<div class="a" style="left:1583px;top:645px;width:15px;height:26px;background:#EFEDE4"></div>
<div class="t" style="left:1272px;top:653px;font-weight:bold">Form1</div>
<div class="t" style="left:1328px;top:653px">System.Windows.Forms.Form</div>
<div class="a" style="left:1268px;top:673px;width:331px;height:29px;background:linear-gradient(180deg,#FCFCFA 0%,#F5F4EE 60%,#E8E6DA 100%)"></div>
<div class="a" style="left:1271px;top:677px;width:23px;height:22px;background:#C1D2EE;border:1px solid #316AC5"></div>
<div class="a" style="left:1323px;top:677px;width:23px;height:22px;background:#C1D2EE;border:1px solid #316AC5"></div>
<svg style="left:0;top:0" width="1600" height="710">
 <path d="M1587 657 L1594 657 L1590.5 661 Z" fill="#000"/>
 <rect x="1275.5" y="681.5" width="4" height="4" fill="#fff" stroke="#000"/><rect x="1275.5" y="690.5" width="4" height="4" fill="#fff" stroke="#000"/>
 <path d="M1282 682h3M1286 682h4M1282 685h8M1282 691h3M1286 691h4M1282 694h8" stroke="#5A6A98"/>
 <text x="1296" y="688" font-size="9" font-weight="bold" fill="#3A5AA8" font-family="Liberation Serif">A</text>
 <text x="1296" y="698" font-size="9" font-weight="bold" fill="#C04030" font-family="Liberation Serif">Z</text>
 <path d="M1308 680 v16 M1305 693 l3 4 l3 -4" stroke="#000" fill="none" stroke-width="1.3"/>
 <rect x="1320" y="677" width="1" height="22" fill="#C5C2B2"/>
 <rect x="1328.5" y="683.5" width="13" height="11" fill="#fff" stroke="#2A3A68"/><path d="M1331 686h1M1333 686h7M1331 689h1M1333 689h7M1331 692h1M1333 692h7" stroke="#2A3A68"/>
 <path d="M1358 681 L1352 689 L1356 689 L1351 697 L1361 687 L1357 687 L1362 681 Z" fill="#F0B030" stroke="#D08020" stroke-width="0.5"/>
 <rect x="1372" y="677" width="1" height="22" fill="#C5C2B2"/>
 <rect x="1378.5" y="680.5" width="16" height="15" fill="#E4E2D8" stroke="#B0AEA2"/><rect x="1381.5" y="684.5" width="10" height="7" fill="none" stroke="#B0AEA2"/>
</svg>
<div class="a" style="left:1268px;top:701px;width:307px;height:422px;background:#fff;overflow:hidden">
 <div class="a" style="left:0;top:0;width:16px;height:424px;background:#ECE9D8"></div>

<div class="t" style="left:20px;top:7px;-webkit-text-stroke:0.4px #000">AccessibleDescript</div>
<div class="t" style="left:20px;top:30px;-webkit-text-stroke:0.4px #000">AccessibleName</div>
<div class="t" style="left:20px;top:53px;-webkit-text-stroke:0.4px #000">AccessibleRole</div>
<div class="t" style="left:162px;top:53px;">Default</div>
<div class="a" style="left:0;top:70px;width:308px;height:23px;background:#ECE9D8"></div>
<div class="t" style="left:20px;top:76px;font-weight:bold">Appearance</div>
<div class="t" style="left:20px;top:99px;-webkit-text-stroke:0.4px #000">BackColor</div>
<div class="t" style="left:189px;top:99px;font-weight:bold;">Window</div>
<div class="t" style="left:20px;top:122px;-webkit-text-stroke:0.4px #000">BackgroundImage</div>
<div class="t" style="left:189px;top:122px;">(none)</div>
<div class="t" style="left:20px;top:145px;-webkit-text-stroke:0.4px #000">BackgroundImageL</div>
<div class="t" style="left:162px;top:145px;">Tile</div>
<div class="t" style="left:20px;top:168px;-webkit-text-stroke:0.4px #000">Cursor</div>
<div class="t" style="left:162px;top:168px;">Default</div>
<div class="t" style="left:20px;top:191px;-webkit-text-stroke:0.4px #000">Font</div>
<div class="t" style="left:162px;top:191px;">Microsoft Sans Serif; 8,25pt</div>
<div class="t" style="left:20px;top:214px;-webkit-text-stroke:0.4px #000">ForeColor</div>
<div class="t" style="left:189px;top:214px;">ControlText</div>
<div class="t" style="left:20px;top:237px;-webkit-text-stroke:0.4px #000">FormBorderStyle</div>
<div class="t" style="left:162px;top:237px;">Sizable</div>
<div class="t" style="left:20px;top:260px;-webkit-text-stroke:0.4px #000">RightToLeft</div>
<div class="t" style="left:162px;top:260px;">No</div>
<div class="t" style="left:20px;top:283px;-webkit-text-stroke:0.4px #000">RightToLeftLayout</div>
<div class="t" style="left:162px;top:283px;">False</div>
<div class="a" style="left:16px;top:300px;width:143px;height:22px;background:#E2DFD4"></div>
<div class="t" style="left:20px;top:306px;-webkit-text-stroke:0.4px #000">Text</div>
<div class="t" style="left:162px;top:306px;font-weight:bold;letter-spacing:0.6px;">Нажмите кл. Enter</div>
<div class="t" style="left:20px;top:329px;-webkit-text-stroke:0.4px #000">UseWaitCursor</div>
<div class="t" style="left:162px;top:329px;">False</div>
<div class="a" style="left:0;top:346px;width:308px;height:23px;background:#ECE9D8"></div>
<div class="t" style="left:20px;top:352px;font-weight:bold">Behavior</div>
<div class="t" style="left:20px;top:375px;-webkit-text-stroke:0.4px #000">AllowDrop</div>
<div class="t" style="left:162px;top:375px;">False</div>
<div class="t" style="left:20px;top:398px;-webkit-text-stroke:0.4px #000">AutoValidate</div>
<div class="t" style="left:162px;top:398px;">EnablePreventFocusChange</div>
<div class="t" style="left:20px;top:421px;-webkit-text-stroke:0.4px #000"></div>
<div class="t" style="left:162px;top:421px;">(none)</div>
<svg style="left:0;top:0" width="308" height="424">
<path d="M16 23.5 H308" stroke="#F0EFEA"/>
<path d="M16 46.5 H308" stroke="#F0EFEA"/>
<path d="M16 69.5 H308" stroke="#F0EFEA"/>
<rect x="4.5" y="77.5" width="8" height="8" fill="#fff" stroke="#000"/><path d="M6 82 h5" stroke="#000"/>
<path d="M16 115.5 H308" stroke="#F0EFEA"/>
<rect x="162.5" y="96.5" width="18" height="17" fill="#fff" stroke="#000"/>
<path d="M16 138.5 H308" stroke="#F0EFEA"/>
<rect x="162.5" y="119.5" width="18" height="17" fill="#fff" stroke="#000"/>
<path d="M16 161.5 H308" stroke="#F0EFEA"/>
<path d="M16 184.5 H308" stroke="#F0EFEA"/>
<path d="M16 207.5 H308" stroke="#F0EFEA"/>
<rect x="4.5" y="192.5" width="8" height="8" fill="#fff" stroke="#000"/><path d="M6 197 h5 M8.5 194.5 v5" stroke="#000"/>
<path d="M16 230.5 H308" stroke="#F0EFEA"/>
<rect x="162.5" y="211.5" width="18" height="17" fill="#000" stroke="#000"/>
<path d="M16 253.5 H308" stroke="#F0EFEA"/>
<path d="M16 276.5 H308" stroke="#F0EFEA"/>
<path d="M16 299.5 H308" stroke="#F0EFEA"/>
<path d="M16 322.5 H308" stroke="#F0EFEA"/>
<path d="M16 345.5 H308" stroke="#F0EFEA"/>
<rect x="4.5" y="353.5" width="8" height="8" fill="#fff" stroke="#000"/><path d="M6 358 h5" stroke="#000"/>
<path d="M16 391.5 H308" stroke="#F0EFEA"/>
<path d="M16 414.5 H308" stroke="#F0EFEA"/>
<path d="M16 437.5 H308" stroke="#F0EFEA"/>
<path d="M159.5 0 V424" stroke="#F0EFEA"/>
</svg>
</div>

<div class="a" style="left:1575px;top:701px;width:24px;height:422px;background:#F4F3EE;background-image:repeating-linear-gradient(45deg,#F8F7F3 0 1px,#EFEEE7 1px 2px)"></div>
<div class="a" style="left:1576px;top:703px;width:23px;height:23px;background:#ECE9D8;border:1px solid;border-color:#fff #ACA899 #ACA899 #fff;box-shadow:inset -1px -1px 0 #D8D5C8"></div>
<div class="a" style="left:1576px;top:733px;width:23px;height:100px;background:#ECE9D8;border:1px solid;border-color:#fff #ACA899 #ACA899 #fff;box-shadow:inset -1px -1px 0 #D8D5C8"></div>
<div class="a" style="left:1576px;top:1100px;width:23px;height:23px;background:#ECE9D8;border:1px solid;border-color:#fff #ACA899 #ACA899 #fff;box-shadow:inset -1px -1px 0 #D8D5C8"></div>
<svg style="left:0;top:0" width="1600" height="1130">
 <path d="M1582 719 L1594 719 L1588 712.5 Z" fill="#000"/>
 <path d="M1582 1108 L1594 1108 L1588 1114.5 Z" fill="#000"/>
</svg>
<div class="a" style="left:1268px;top:1124px;width:332px;height:1px;background:#ACA899"></div>
<div class="a" style="left:1268px;top:1132px;width:332px;height:1px;background:#ACA899"></div>

<!-- ============ STATUS BAR ============ -->
<div class="t" style="left:8px;top:1140px;font-size:15.3px">Build succeeded</div>
<div class="t" style="left:1150px;top:1140px">Ln 7</div>
<div class="t" style="left:1262px;top:1140px">Col 1</div>
<div class="t" style="left:1382px;top:1140px">Ch 1</div>
<div class="t" style="left:1543px;top:1140px">INS</div>

<!-- ============ TASKBAR ============ -->
<div class="a" style="left:0;top:1160px;width:1600px;height:40px;background:#ECE9D8;border-top:1px solid #fff;box-shadow:inset 0 1px 0 #fff"></div>
<div class="btn3d" style="left:1px;top:1163px;width:84px;height:35px;border-color:#fff #6A685E #6A685E #fff"></div>
<div class="btn3d" style="left:89px;top:1163px;width:160px;height:35px;border-color:#fff #6A685E #6A685E #fff"></div>
<div class="btn3d" style="left:252px;top:1163px;width:160px;height:35px;border-color:#fff #6A685E #6A685E #fff"></div>
<div class="a" style="left:415px;top:1163px;width:160px;height:35px;border:1px solid;border-color:#6A685E #fff #fff #6A685E;box-shadow:inset 1px 1px 0 #ACA899;background:#F6F5F0"></div>
<svg style="left:0;top:0" width="600" height="1200">
 <!-- start flag -->
 <path d="M5 1172 Q9 1169 12 1171 L11 1179 Q8 1177 4 1180 Z" fill="#E8542A"/>
 <path d="M13 1171 Q16 1173 20 1170 L19 1178 Q16 1180 12 1179 Z" fill="#5AB030"/>
 <path d="M4 1181 Q8 1178 11 1180 L10 1188 Q7 1186 3 1189 Z" fill="#2A6AD8"/>
 <path d="M12 1180 Q15 1182 19 1179 L18 1187 Q15 1189 11 1188 Z" fill="#F8C020"/>
 <!-- VS icon -->
 <ellipse cx="98" cy="1181" rx="5" ry="5" fill="#E8A040"/><ellipse cx="106" cy="1181" rx="6" ry="5" fill="#E04020"/>
 <ellipse cx="95" cy="1180" rx="3" ry="4" fill="#40A040"/><ellipse cx="109" cy="1181" rx="3" ry="4" fill="#F0D040"/><ellipse cx="101" cy="1178" rx="3" ry="2.5" fill="#4070D0"/>
 <!-- word icon -->
 <rect x="260" y="1171" width="14" height="18" fill="#F4F6FC" stroke="#5A78B8"/>
 <rect x="256" y="1173" width="11" height="10" fill="#2A5AB8"/>
 <path d="M258 1175 L259.5 1181 L261.5 1176 L263.5 1181 L265 1175" fill="none" stroke="#fff" stroke-width="1"/>
 <path d="M262 1185h10M262 1187h10" stroke="#8AA0D0"/>
 <!-- form icon -->
 <rect x="421.5" y="1171.5" width="18" height="18" fill="#D8E0F0" stroke="#9AAAC8"/>
 <rect x="423" y="1179" width="5" height="9" fill="#B02020"/>
 <rect x="429" y="1173" width="9" height="9" fill="#F0C830" stroke="#C09020"/>
 <rect x="429" y="1183" width="9" height="5" fill="#6A8AD0"/>
</svg>
<div class="t" style="left:26px;top:1168px;font-size:24px;font-weight:bold">Start</div>
<div class="t" style="left:117px;top:1168px;font-size:24px;letter-spacing:0.45px">PocketJa...</div>
<div class="t" style="left:280px;top:1168px;font-size:24px;letter-spacing:0.45px">Games o...</div>
<div class="t" style="left:446px;top:1169px;font-size:24px;font-weight:bold;letter-spacing:0.6px">Нажмит...</div>

<!-- tray -->
<div class="a" style="left:1437px;top:1170px;width:20px;height:20px;background:#3266C8"></div>
<div class="t" style="left:1437px;top:1173px;font-size:15px;color:#fff;letter-spacing:-1px">EN</div>
<div class="a" style="left:1461px;top:1164px;width:1px;height:32px;background:#ACA899;box-shadow:1px 0 0 #fff"></div>
<div class="a" style="left:1466px;top:1163px;width:133px;height:35px;border:1px solid;border-color:#ACA899 #fff #fff #ACA899"></div>
<div class="t" style="left:1470px;top:1172px;font-size:18px;font-weight:bold">«</div>
<svg style="left:1488px;top:1168px" width="24" height="24">
 <rect x="7" y="2" width="10" height="13" fill="#2A3A88"/><rect x="8" y="3" width="8" height="6" fill="#6A8AD8"/>
 <rect x="1" y="6" width="10" height="14" fill="#2A3A88"/><rect x="2" y="7" width="8" height="7" fill="#7A9AE0"/>
 <path d="M12 15 L19 22 M19 15 L12 22" stroke="#E02020" stroke-width="2.2"/>
</svg>
<div class="t" style="left:1529px;top:1169px;font-size:22px;letter-spacing:1.6px">0:37</div>

</body></html>
